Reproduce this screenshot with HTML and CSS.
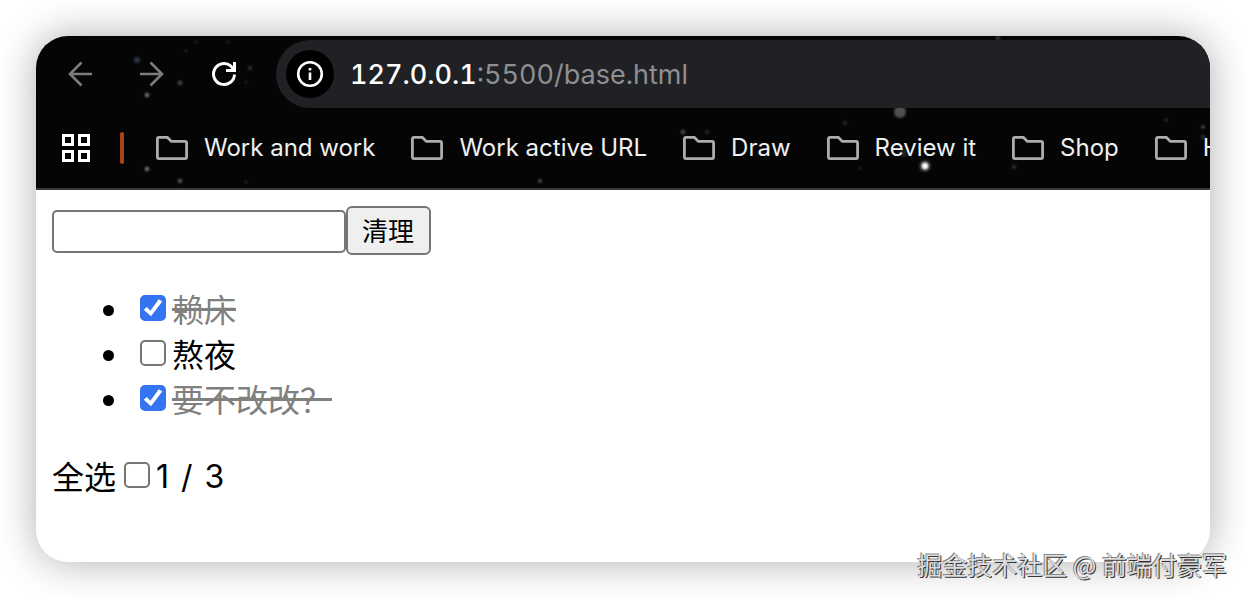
FILE: index.html
```html
<!DOCTYPE html>
<html lang="zh-CN">
<head>
<meta charset="utf-8">
<title>base.html</title>
<link rel="stylesheet" href="styles.css">
</head>
<body>
<svg class="symbols" aria-hidden="true">
  <symbol id="folder" viewBox="0 0 32 24">
    <path d="M3 1.4H11.4L15.4 5.4H29Q30.6 5.4 30.6 7V21Q30.6 22.6 29 22.6H3Q1.4 22.6 1.4 21V3Q1.4 1.4 3 1.4Z" fill="none" stroke="#adadad" stroke-width="2.8"/>
  </symbol>
</svg>
<div class="window">
  <header class="chrome">
    <svg class="stars" width="1174" height="152" aria-hidden="true">
      <g fill="#fff">
        <circle cx="111" cy="59" r="2.2" opacity=".45"/>
        <circle cx="144" cy="47" r="2.4" opacity=".25"/>
        <circle cx="111" cy="133" r="2.2" opacity=".45"/>
        <circle cx="144" cy="145" r="2.4" opacity=".3"/>
        <circle cx="214" cy="32" r="2" opacity=".2"/>
        <circle cx="210" cy="46" r="1.6" opacity=".12"/>
        <circle cx="150" cy="15" r="1.6" opacity=".15"/>
        <circle cx="160" cy="6" r="1.6" opacity=".12"/>
        <circle cx="192" cy="6" r="1.6" opacity=".12"/>
        <circle cx="210" cy="146" r="1.6" opacity=".15"/>
        <circle cx="504" cy="145" r="2" opacity=".3"/>
        <circle cx="647" cy="96" r="2.4" opacity=".25"/>
        <circle cx="671" cy="96" r="2" opacity=".15"/>
        <circle cx="864" cy="76" r="6" opacity=".3"/>
        <circle cx="867" cy="117" r="4" opacity=".12"/>
        <circle cx="889" cy="130" r="6" opacity=".18"/>
        <circle cx="889" cy="130" r="3.4"/>
        <circle cx="809" cy="87" r="2" opacity=".15"/>
        <circle cx="824" cy="132" r="1.6" opacity=".15"/>
        <circle cx="978" cy="131" r="2" opacity=".2"/>
        <circle cx="962" cy="2" r="2" opacity=".25"/>
        <circle cx="1130" cy="84" r="2" opacity=".15"/>
        <circle cx="1167" cy="91" r="2" opacity=".25"/>
        <circle cx="1167" cy="101" r="2" opacity=".2"/>
      </g>
      <circle cx="101" cy="24" r="3" fill="#3a4a66" opacity=".7"/>
    </svg>
    <div class="toolbar">
      <button class="tool" type="button" aria-label="Back">
        <svg width="28" height="28" viewBox="0 0 28 28" fill="none" stroke="#7c7c7c" stroke-width="2.6"><path d="M26 14H4M15.500 2.500L4 14L15.500 25.500"/></svg>
      </button>
      <button class="tool" type="button" aria-label="Forward">
        <svg width="28" height="28" viewBox="0 0 28 28" fill="none" stroke="#7c7c7c" stroke-width="2.6"><path d="M2 14H24M12.500 2.500L24 14L12.500 25.500"/></svg>
      </button>
      <button class="tool" type="button" aria-label="Reload">
        <svg width="28" height="28" viewBox="0 0 28 28" fill="none" stroke="#fff" stroke-width="3"><path d="M24.500 14.500A10.500 10.500 0 1 1 21 6.200L24 9.500M24.500 2V10.500H16"/></svg>
      </button>
      <div class="omnibox">
        <button class="info" type="button" aria-label="Site information">
          <svg width="28" height="28" viewBox="0 0 28 28" fill="none" stroke="#fff"><circle cx="14" cy="14" r="11.800" stroke-width="2.600"/><path d="M14 12.500V20M14 8V10.600" stroke-width="2.600"/></svg>
        </button>
        <div class="url"><span class="host">127.0.0.1</span>:5500/base.html</div>
      </div>
    </div>
    <nav class="bookmarks" aria-label="Bookmarks">
      <button class="apps" type="button" aria-label="Apps">
        <svg width="28" height="28" viewBox="0 0 28 28" fill="none" stroke="#fff" stroke-width="3"><path d="M1.500 1.500h9v9h-9zM17.500 1.500h9v9h-9zM1.500 17.500h9v9h-9zM17.500 17.500h9v9h-9z"/></svg>
      </button>
      <span class="divider"></span>
      <a class="bookmark" href="#"><svg width="32" height="24"><use href="#folder"/></svg>Work and work</a>
      <a class="bookmark" href="#"><svg width="32" height="24"><use href="#folder"/></svg>Work active URL</a>
      <a class="bookmark" href="#"><svg width="32" height="24"><use href="#folder"/></svg>Draw</a>
      <a class="bookmark" href="#"><svg width="32" height="24"><use href="#folder"/></svg>Review it</a>
      <a class="bookmark" href="#"><svg width="32" height="24"><use href="#folder"/></svg>Shop</a>
      <a class="bookmark" href="#"><svg width="32" height="24"><use href="#folder"/></svg>H</a>
    </nav>
  </header>
  <main class="page">
    <form class="entry">
      <input class="field" type="text" aria-label="待办">
      <button class="clear" type="button">清理</button>
    </form>
    <ul class="todos">
      <li class="todo"><label class="option done"><input class="check" type="checkbox" checked><span>赖床</span></label></li>
      <li class="todo"><label class="option"><input class="check" type="checkbox"><span>熬夜</span></label></li>
      <li class="todo"><label class="option done"><input class="check" type="checkbox" checked><span>要不改改？</span></label></li>
    </ul>
    <div class="summary">
      <label class="option">全选<input class="check" type="checkbox"></label>
      <div class="count"><span>1</span><span>/</span><span>3</span></div>
    </div>
  </main>
</div>
<div class="watermark">掘金技术社区 @ 前端付豪军</div>
</body>
</html>
```
FILE: styles.css
```css
* {
  box-sizing: border-box;
}

body {
  margin: 0;
  min-height: 100vh;
  padding: 36px;
  display: flex;
  background: #fff;
  color: #000;
  font-family: "Noto Sans CJK SC", sans-serif;
}

button {
  margin: 0;
  padding: 0;
  border: 0;
  background: none;
}

svg {
  display: block;
  flex: none;
}

.symbols {
  position: absolute;
  width: 0;
  height: 0;
}

.window {
  flex: 1;
  min-width: 0;
  border-radius: 32px;
  overflow: hidden;
  background: #fff;
  box-shadow: 0 0 40px rgba(0, 0, 0, 0.32);
}

.chrome {
  position: relative;
  overflow: hidden;
  background: #050505;
  border-bottom: 2px solid #3b393b;
  font-family: Inter, sans-serif;
}

.stars {
  position: absolute;
  top: 0;
  left: 0;
  filter: blur(1px);
}

.toolbar {
  position: relative;
  display: flex;
  align-items: center;
  gap: 44px;
  padding: 4px 0 0 30px;
}

.omnibox {
  flex: 1;
  display: flex;
  align-items: center;
  gap: 16px;
  height: 68px;
  margin-left: -6px;
  padding-left: 10px;
  border-radius: 34px 0 0 34px;
  background: #202124;
}

.info {
  display: grid;
  place-items: center;
  width: 48px;
  height: 48px;
  border-radius: 50%;
  background: #000;
}

.url {
  color: #8e8f91;
  font-size: 27px;
  font-variant-numeric: tabular-nums;
}

.host {
  color: #fff;
  font-weight: 500;
}

.bookmarks {
  position: relative;
  display: flex;
  align-items: center;
  height: 80px;
  padding: 0 0 2px 26px;
  white-space: nowrap;
}

.apps,
.bookmark svg {
  margin-top: 2px;
}

.divider {
  flex: none;
  width: 4px;
  height: 32px;
  margin: 2px 32px 0 30px;
  border-radius: 2px;
  background: #a8431c;
}

.bookmark {
  display: flex;
  align-items: center;
  gap: 16px;
  margin-right: 36px;
  color: #f0f0f0;
  font-size: 24px;
  text-decoration: none;
}

.page {
  padding: 16px;
  font-size: 32px;
  line-height: 42px;
}

.entry {
  display: flex;
  align-items: flex-end;
}

.field {
  width: 294px;
  height: 43px;
  margin-bottom: 2px;
  border: 2px solid #767676;
  border-radius: 5px;
  background: #fff;
  font-size: 26px;
}

.clear {
  height: 49px;
  padding: 0 15px 2px 14px;
  border: 2px solid #767676;
  border-radius: 6px;
  background: #efefef;
  color: #000;
  font-family: inherit;
  font-size: 26px;
  line-height: 42px;
}

.todos {
  margin: 32px 0;
  padding: 0;
  list-style: none;
}

.todo {
  display: flex;
  align-items: center;
}

.todo::before {
  content: "";
  width: 11px;
  height: 11px;
  margin: 2px 18px 0 51px;
  border-radius: 50%;
  background: #000;
}

.option {
  display: flex;
  align-items: center;
  padding-bottom: 3px;
}

.done {
  color: #808080;
  text-decoration: line-through;
}

.check {
  appearance: none;
  width: 26px;
  height: 26px;
  margin: 0 6px 0 8px;
  border: 2px solid #767676;
  border-radius: 5px;
  background: #fff;
}

.check:checked {
  border-color: #3574f0;
  background: #3574f0;
}

.check:checked::before {
  content: "";
  display: block;
  width: 22px;
  height: 22px;
  background: #fff;
  clip-path: polygon(8% 58%, 22% 46%, 38% 63%, 76% 10%, 92% 20%, 41% 88%);
}

.summary {
  display: flex;
  align-items: center;
}

.count {
  display: flex;
  gap: 12px;
  font-family: Inter, sans-serif;
}

.watermark {
  position: absolute;
  right: 19px;
  bottom: 16px;
  color: #dcdcdc;
  font-size: 25px;
  line-height: 36px;
  text-shadow: 1px 1px 0 #333, -1px -1px 0 #888;
}
```
